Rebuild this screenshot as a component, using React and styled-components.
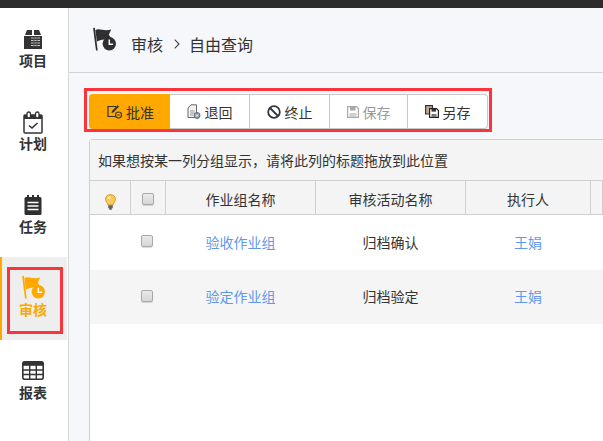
import React from 'react';
import styled, { createGlobalStyle } from 'styled-components';

const GlobalStyle = createGlobalStyle`
  html, body {
    margin: 0;
    padding: 0;
    height: 100%;
    overflow: hidden;
    background: #f6f7fb;
    font-family: "Noto Sans CJK SC", "Noto Sans", sans-serif;
  }
  * { box-sizing: border-box; }
`

const Page = styled.div`
  width: 603px;
  height: 441px;
  display: flex;
  flex-direction: column;
  overflow: hidden;
`

const TopBar = styled.div`
  height: 8px;
  flex: none;
  background: #2c2c2c;
`

const Body = styled.div`
  flex: 1;
  display: flex;
  min-height: 0;
`

const Sidebar = styled.nav`
  width: 69px;
  flex: none;
  background: #fff;
  border-right: 1px solid #d6d6d6;
`

const NavItem = styled.div`
  height: 83px;
  margin-right: 1px;
  display: flex;
  justify-content: center;
  align-items: center;
  background: ${p => (p.$active ? '#eeeeee' : 'transparent')};
  border-left: 2px solid ${p => (p.$active ? '#ffa800' : 'transparent')};
  color: ${p => (p.$active ? '#ffa800' : '#333')};
`

const NavMark = styled.div`
  width: 56px;
  height: 67px;
  margin: 4px 0 0 1px;
  padding: 0 4px 13px 0;
  display: flex;
  flex-direction: column;
  align-items: center;
  justify-content: flex-end;
  gap: ${p => p.$gap}px;
  border: 3px solid ${p => (p.$marked ? '#f9343a' : 'transparent')};
`

const NavLabel = styled.span`
  font-size: 14px;
  line-height: 18px;
  font-weight: 700;
`

const Main = styled.main`
  flex: 1;
  min-width: 0;
  display: flex;
  flex-direction: column;
`

const Header = styled.header`
  height: 65px;
  flex: none;
  padding: 19px 0 0 24px;
  display: flex;
  align-items: flex-start;
  border-bottom: 1px solid #d2d2d2;
`

const Crumbs = styled.div`
  display: flex;
  align-items: center;
  margin: 4px 0 0 15px;
  font-size: 16px;
  line-height: 26px;
  color: #333;
`

const CrumbArrow = styled.span`
  margin: 0 9px 0 11px;
  display: flex;
`

const ToolbarMark = styled.div`
  margin: 15px 0 0 15px;
  width: 408px;
  height: 44px;
  flex: none;
  padding: 3px 1px 0 2px;
  border: 3px solid #f9343a;
`

const Toolbar = styled.div`
  display: flex;
  height: 35px;
  border: 1px solid #c8c8c8;
  border-left: 0;
  border-radius: 4px;
  background: #fff;
`

const ToolButton = styled.div`
  width: ${p => p.$w}px;
  flex: none;
  display: flex;
  align-items: center;
  justify-content: center;
  gap: 4px;
  padding-left: ${p => (p.$primary ? '2px' : '0')};
  font-size: 14px;
  color: ${p => (p.$disabled ? '#999' : '#333')};
  background: ${p => (p.$primary ? '#ffa800' : 'transparent')};
  border-right: ${p => (p.$last || p.$primary ? '0' : '1px solid #c8c8c8')};
  border-radius: ${p => (p.$primary ? '4px 0 0 4px' : '0')};
  margin: ${p => (p.$primary ? '-1px 0' : '0')};
`

const Grid = styled.section`
  margin: 7px 0 0 20px;
  flex: 1;
  background: #fff;
  border: 1px solid #cfcfcf;
  border-right: 0;
  border-bottom: 0;
  border-top-left-radius: 4px;
`

const GroupPanel = styled.div`
  height: 41px;
  padding-left: 8px;
  display: flex;
  align-items: center;
  font-size: 14px;
  color: #333;
  background: #f4f4f4;
  border-bottom: 1px solid #cfcfcf;
`

const Row = styled.div`
  display: grid;
  grid-template-columns: 41px 35px 150px 150px 125px 1fr;
  height: ${p => p.$h}px;
  background: ${p => p.$bg};
  border-bottom: ${p => (p.$head ? '1px solid #cfcfcf' : '0')};
`

const HeadCell = styled.div`
  display: flex;
  align-items: center;
  justify-content: center;
  padding-top: 2px;
  font-size: 14px;
  color: #333;
  border-right: 1px solid #cfcfcf;
`

const Cell = styled.div`
  display: flex;
  align-items: center;
  justify-content: center;
  padding: 0 1px 2px 0;
  font-size: 14px;
  color: ${p => (p.$link ? '#5f98ee' : '#333')};
`

const CheckBox = styled.span`
  width: 12px;
  height: 12px;
  border: 1px solid #a9a9a9;
  border-radius: 2px;
  background: linear-gradient(#e9e9e9, #d6d6d6);
  box-shadow: 0 1px 1px rgba(0, 0, 0, 0.15);
  margin: ${p => (p.$head ? '1px 0 0 0' : '-1px 2px 0 0')};
`

const BulbSlot = styled.span`
  display: flex;
  margin-top: 6px;
`

const ProjectIcon = () => (
  <svg width="20" height="20" viewBox="0 0 20 20">
    <path d="M2 6 L4 1 H9 V6 Z M11 6 V1 H16 L18 6 Z" fill="#333" />
    <rect x="1" y="7" width="18" height="13" fill="#333" />
    <path d="M8 9 H17 M8 11.5 H17 M8 14 H17 M8 16.5 H17" stroke="#c8c8c8" strokeWidth="1.2" />
    <path d="M11 8 V18 M14 8 V18" stroke="#555" strokeWidth="1" />
  </svg>
)

const PlanIcon = () => (
  <svg width="20" height="23" viewBox="0 0 20 23">
    <rect x="1" y="4" width="18" height="18" rx="1" fill="#fff" stroke="#333" strokeWidth="1.5" />
    <rect x="1" y="4" width="18" height="4" fill="#333" />
    <rect x="4" y="1" width="3.5" height="6" rx="1.7" fill="#fff" stroke="#333" strokeWidth="1.3" />
    <rect x="12.5" y="1" width="3.5" height="6" rx="1.7" fill="#fff" stroke="#333" strokeWidth="1.3" />
    <path d="M6 14.5 L9 17 L14.5 12" fill="none" stroke="#333" strokeWidth="1.6" />
  </svg>
)

const TaskIcon = () => (
  <svg width="18" height="21" viewBox="0 0 18 21">
    <rect x="0.5" y="3" width="17" height="18" rx="1.5" fill="#2f2f2f" />
    <path d="M4 1 V5 M9 1 V5 M14 1 V5" stroke="#2f2f2f" strokeWidth="2" />
    <path d="M3.5 8.5 H14.5 M3.5 12 H14.5 M3.5 15.5 H14.5" stroke="#fff" strokeWidth="1.6" />
  </svg>
)

const AuditIcon = ({ size = 23, color }) => (
  <svg width={size} height={size + 1} viewBox="0 0 24 25">
    <path d="M1 1 L4 24.5" stroke={color} strokeWidth="1.8" fill="none" />
    <path d="M2.5 3 C7 0.5 11 5 19 2.5 L16.5 8 L20 13 C16 14 14 13 12 13 C9 13 7 14 4 15 Z" fill={color} />
    <circle cx="17" cy="17.5" r="7" fill={color} />
    <path d="M17 13 V18 H21" stroke="#fff" strokeWidth="1.5" fill="none" />
  </svg>
)

const ReportIcon = () => (
  <svg width="22" height="19" viewBox="0 0 22 19">
    <rect x="0.8" y="0.8" width="20.4" height="17.4" rx="2" fill="none" stroke="#333" strokeWidth="1.6" />
    <rect x="0.8" y="0.8" width="20.4" height="4" fill="#333" />
    <path d="M1 9 H21 M1 13.5 H21 M7.7 4 V18 M14.3 4 V18" stroke="#333" strokeWidth="1.4" />
  </svg>
)

const ApproveIcon = () => (
  <svg width="15" height="15" viewBox="0 0 15 15">
    <path d="M9 2.5 H1 V12.5 H8" fill="none" stroke="#333" strokeWidth="1.2" />
    <path d="M4.5 9 L5 7 L10.5 1.2 L12 2.6 L6.5 8.5 Z" fill="#333" />
    <circle cx="11.5" cy="11" r="3" fill="none" stroke="#333" strokeWidth="1.1" />
    <path d="M10.2 11 H12.8" stroke="#333" />
  </svg>
)

const ReturnIcon = () => (
  <svg width="14" height="15" viewBox="0 0 14 15">
    <path d="M4 0.8 H9.5 V13.5 H1 V4 Z" fill="#f2f2f2" stroke="#666" strokeWidth="1" />
    <path d="M3 7 H7.5 M3 9 H7.5 M3 11 H6" stroke="#999" strokeWidth="1" />
    <circle cx="10" cy="11.5" r="3" fill="#8a9db5" stroke="#556" strokeWidth="0.8" />
    <path d="M8.8 10.3 L11.2 12.7 M11.2 10.3 L8.8 12.7" stroke="#fff" strokeWidth="0.8" />
  </svg>
)

const StopIcon = () => (
  <svg width="14" height="14" viewBox="0 0 14 14">
    <circle cx="7" cy="7" r="5.8" fill="none" stroke="#2d3540" strokeWidth="1.8" />
    <path d="M3 3 L11 11" stroke="#2d3540" strokeWidth="1.8" />
  </svg>
)

const SaveIcon = () => (
  <svg width="12" height="12" viewBox="0 0 12 12">
    <path d="M0.6 0.6 H9.5 L11.4 2.5 V11.4 H0.6 Z" fill="none" stroke="#a8a8a8" strokeWidth="1.2" />
    <rect x="3" y="1" width="5.5" height="3.5" fill="#a8a8a8" />
    <rect x="2.5" y="7" width="7" height="4" fill="#d0d0d0" />
  </svg>
)

const SaveAsIcon = () => (
  <svg width="14" height="13" viewBox="0 0 14 13">
    <path d="M0.6 0.6 H7.5 V9 H0.6 Z" fill="#c6a98a" stroke="#333" strokeWidth="1.1" />
    <path d="M4.6 3.6 H11.5 L13.4 5.5 V12.4 H4.6 Z" fill="#fff" stroke="#222" strokeWidth="1.2" />
    <rect x="6.5" y="4" width="4.5" height="2.6" fill="#333" />
    <rect x="6.5" y="9" width="5" height="3" fill="#777" />
  </svg>
)

const BulbIcon = () => (
  <svg width="11" height="16" viewBox="0 0 11 16">
    <path d="M5.5 0.6 C2.6 0.6 0.6 2.6 0.6 5.2 C0.6 7.6 2.6 8.6 3 11 H8 C8.4 8.6 10.4 7.6 10.4 5.2 C10.4 2.6 8.4 0.6 5.5 0.6 Z" fill="#f7c95a" stroke="#d69a2b" strokeWidth="1" />
    <ellipse cx="4.2" cy="3.8" rx="1.6" ry="1.4" fill="#fdeebb" />
    <rect x="3.2" y="11.2" width="4.6" height="3" fill="#5c6670" />
    <rect x="4.2" y="14.2" width="2.6" height="1.4" fill="#3c444c" />
  </svg>
)

const ChevronIcon = () => (
  <svg width="6" height="10" viewBox="0 0 6 10">
    <path d="M0.7 0.7 L5 5 L0.7 9.3" fill="none" stroke="#444" strokeWidth="1.1" />
  </svg>
)

const navItems = [
  { label: '项目', gap: 2, icon: <ProjectIcon /> },
  { label: '计划', gap: 0, icon: <PlanIcon /> },
  { label: '任务', gap: 2, icon: <TaskIcon /> },
  { label: '审核', gap: 1, icon: <AuditIcon color="#ffa800" />, active: true },
  { label: '报表', gap: 3, icon: <ReportIcon /> },
]

const tools = [
  { label: '批准', w: 81, icon: <ApproveIcon />, primary: true },
  { label: '退回', w: 80, icon: <ReturnIcon /> },
  { label: '终止', w: 80, icon: <StopIcon /> },
  { label: '保存', w: 78, icon: <SaveIcon />, disabled: true },
  { label: '另存', w: 79, icon: <SaveAsIcon />, last: true },
]

const rows = [
  { group: '验收作业组', activity: '归档确认', owner: '王娟', bg: '#fff', h: 55 },
  { group: '验定作业组', activity: '归档验定', owner: '王娟', bg: '#f5f5f5', h: 54 },
]

const App = () => (
  <Page>
    <GlobalStyle />
    <TopBar />
    <Body>
      <Sidebar>
        {navItems.map(item => (
          <NavItem key={item.label} $active={item.active}>
            <NavMark $marked={item.active} $gap={item.gap}>
              {item.icon}
              <NavLabel>{item.label}</NavLabel>
            </NavMark>
          </NavItem>
        ))}
      </Sidebar>
      <Main>
        <Header>
          <AuditIcon size={23} color="#2f2f2f" />
          <Crumbs>
            审核
            <CrumbArrow><ChevronIcon /></CrumbArrow>
            自由查询
          </Crumbs>
        </Header>
        <ToolbarMark>
          <Toolbar>
            {tools.map(tool => (
              <ToolButton
                key={tool.label}
                $w={tool.w}
                $primary={tool.primary}
                $disabled={tool.disabled}
                $last={tool.last}
              >
                {tool.icon}
                {tool.label}
              </ToolButton>
            ))}
          </Toolbar>
        </ToolbarMark>
        <Grid>
          <GroupPanel>如果想按某一列分组显示，请将此列的标题拖放到此位置</GroupPanel>
          <Row $head $h={34} $bg="#f4f4f4">
            <HeadCell><BulbSlot><BulbIcon /></BulbSlot></HeadCell>
            <HeadCell><CheckBox $head /></HeadCell>
            <HeadCell>作业组名称</HeadCell>
            <HeadCell>审核活动名称</HeadCell>
            <HeadCell>执行人</HeadCell>
            <HeadCell />
          </Row>
          {rows.map(row => (
            <Row key={row.group} $h={row.h} $bg={row.bg}>
              <Cell />
              <Cell><CheckBox /></Cell>
              <Cell $link>{row.group}</Cell>
              <Cell>{row.activity}</Cell>
              <Cell $link>{row.owner}</Cell>
              <Cell />
            </Row>
          ))}
        </Grid>
      </Main>
    </Body>
  </Page>
);

export default App;
